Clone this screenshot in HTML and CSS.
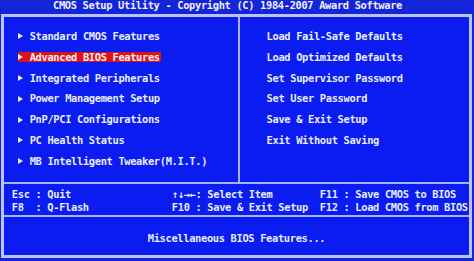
FILE: index.html
```html
<!DOCTYPE html>
<html lang="en">

<head>
    <meta charset="UTF-8">
    <meta name="viewport" content="width=device-width, initial-scale=1.0">
    <title>CMOS Setup Utility</title>
    <link rel="stylesheet" href="styles.css">
</head>

<body>

    <div class="screen">

        <div class="title">CMOS Setup Utility - Copyright (C) 1984-2007 Award Software</div>

        <div class="frame">

            <!-- Menus -->
            <div class="menus">
                <ul class="menu menu-left">
                    <li class="item"><span class="label">Standard CMOS Features</span></li>
                    <li class="item selected"><span class="label">Advanced BIOS Features</span></li>
                    <li class="item"><span class="label">Integrated Peripherals</span></li>
                    <li class="item"><span class="label">Power Management Setup</span></li>
                    <li class="item"><span class="label">PnP/PCI Configurations</span></li>
                    <li class="item"><span class="label">PC Health Status</span></li>
                    <li class="item"><span class="label">MB Intelligent Tweaker(M.I.T.)</span></li>
                </ul>
                <ul class="menu menu-right">
                    <li class="item"><span class="label">Load Fail-Safe Defaults</span></li>
                    <li class="item"><span class="label">Load Optimized Defaults</span></li>
                    <li class="item"><span class="label">Set Supervisor Password</span></li>
                    <li class="item"><span class="label">Set User Password</span></li>
                    <li class="item"><span class="label">Save &amp; Exit Setup</span></li>
                    <li class="item"><span class="label">Exit Without Saving</span></li>
                </ul>
            </div>

            <!-- Keys -->
            <div class="keys">
                <span class="key">Esc : Quit</span>
                <span class="key">↑↓→←: Select Item</span>
                <span class="key">F11 : Save CMOS to BIOS</span>
                <span class="key">F8  : Q-Flash</span>
                <span class="key">F10 : Save &amp; Exit Setup</span>
                <span class="key">F12 : Load CMOS from BIOS</span>
            </div>

            <!-- Help -->
            <div class="help">Miscellaneous BIOS Features...</div>

        </div>
    </div>

</body>

</html>
```

FILE: styles.css
```css
body {
    margin: 0;
    background-color: #0e168c;
    font-family: "DejaVu Sans Mono", "Liberation Mono", monospace;
    font-weight: bold;
    font-size: 10.4px;
    letter-spacing: -0.34px;
    color: #e8ecff;
}

.screen {
    width: 474px;
    height: 261px;
    background-color: #1424d8;
    overflow: hidden;
}

.title {
    height: 14px;
    line-height: 10px;
    padding-left: 53px;
    white-space: pre;
    color: #eef0ff;
}

.frame {
    margin-left: 1px;
    width: 465px;
    height: 238px;
    border: 3px solid #bcc2f0;
    background-color: #0a1cf0;
    display: flex;
    flex-direction: column;
}

.menus {
    display: flex;
    height: 165px;
    border-bottom: 2px solid #aab2f0;
}

.menu {
    list-style: none;
    margin: 0;
    padding: 13.8px 0 0 0;
}

.menu-left {
    width: 234px;
    border-right: 2px solid #aab2f0;
}

.menu-right {
    flex: 1;
    padding-left: 26.6px;
}

.item {
    display: flex;
    height: 10.44px;
    line-height: 10.44px;
    margin-bottom: 10.44px;
    white-space: pre;
}

.menu-left .item {
    padding-left: 13.8px;
}

.menu-left .label {
    display: flex;
    align-items: center;
}

.menu-left .label::before {
    content: "";
    width: 0;
    height: 0;
    border-left: 5px solid #e8ecff;
    border-top: 3px solid transparent;
    border-bottom: 3px solid transparent;
    margin-right: 6.85px;
}

.selected .label {
    background-color: #e0101c;
    color: #fff4f4;
    padding-right: 1px;
}

.keys {
    display: grid;
    grid-template-columns: 160px 148px 1fr;
    height: 26px;
    padding: 5px 0 0 7.85px;
    line-height: 10.44px;
    border-bottom: 2px solid #aab2f0;
}

.key {
    white-space: pre;
}

.help {
    flex: 1;
    padding-top: 15.5px;
    line-height: 10.44px;
    text-align: center;
    white-space: pre;
}
```
